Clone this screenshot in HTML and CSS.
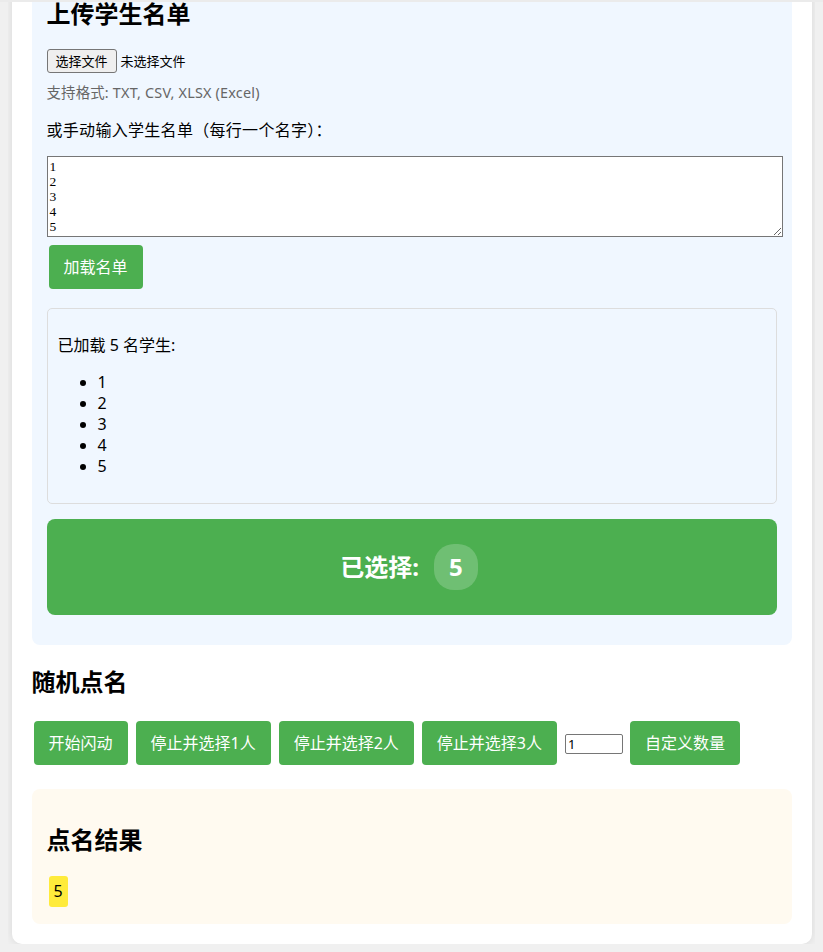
FILE: index.html
```html
<!DOCTYPE html>
<html lang="zh-CN">
<head>
<meta charset="utf-8">
<title>随机点名系统</title>
<link rel="stylesheet" href="styles.css">
</head>
<body>
<div class="top-edge"></div>
<div class="container">
  <h1 class="title">随机点名系统</h1>
  <div class="upload">
    <h2 class="upload-title">上传学生名单</h2>
    <div class="file-row">
      <button class="file-btn" type="button">选择文件</button>
      <span class="file-name">未选择文件</span>
    </div>
    <p class="hint">支持格式: TXT, CSV, XLSX (Excel)</p>
    <p class="label">或手动输入学生名单（每行一个名字）：</p>
    <textarea class="names-input" rows="5">1
2
3
4
5</textarea>
    <div class="load-row">
      <button class="btn" type="button">加载名单</button>
    </div>
    <div class="student-list">
      <p class="loaded">已加载 5 名学生:</p>
      <ul class="list">
        <li>1</li>
        <li>2</li>
        <li>3</li>
        <li>4</li>
        <li>5</li>
      </ul>
    </div>
    <div class="selected">
      <span class="selected-label">已选择:</span>
      <span class="count">5</span>
    </div>
  </div>

  <h2 class="roll-title">随机点名</h2>
  <div class="controls">
    <button class="btn" type="button">开始闪动</button>
    <button class="btn" type="button">停止并选择1人</button>
    <button class="btn" type="button">停止并选择2人</button>
    <button class="btn" type="button">停止并选择3人</button>
    <input class="num" type="number" value="1" min="1">
    <button class="btn" type="button">自定义数量</button>
  </div>

  <div class="result">
    <h2 class="result-title">点名结果</h2>
    <div class="result-names">
      <span class="name">5</span>
    </div>
  </div>
</div>
<script src="script.js"></script>
</body>
</html>
```

FILE: styles.css
```css
html {
  scrollbar-width: none;
}
html::-webkit-scrollbar {
  display: none;
}
body {
  margin: 8px;
  background: #f0f0f0;
  font-family: "Noto Sans", "Noto Sans CJK SC", sans-serif;
  font-size: 16px;
  line-height: 21px;
  color: #000;
}
.top-edge {
  position: fixed;
  top: 0;
  left: 0;
  right: 0;
  height: 2px;
  background: #ebebeb;
  z-index: 10;
}
.container {
  max-width: 800px;
  box-sizing: border-box;
  margin: 0 auto;
  background: #fff;
  padding: 20px;
  border-radius: 10px;
  box-shadow: 0 0 10px rgba(0, 0, 0, 0.1);
}
.title {
  text-align: center;
  font-size: 32px;
  line-height: 42px;
  margin: 0 0 20px;
  color: #333;
}
h2 {
  font-size: 24px;
  line-height: 32px;
  font-weight: bold;
  margin: 20px 0;
}
.upload {
  background: #f0f7ff;
  border-radius: 8px;
  padding: 15px;
}
.upload-title {
  margin: 20px 0 19px;
}
.file-row {
  display: flex;
  align-items: center;
  gap: 4px;
  height: 24px;
  font-size: 13px;
}
.file-btn {
  font-family: "Noto Sans", "Noto Sans CJK SC", sans-serif;
  font-size: 13px;
  line-height: 16px;
  height: 24px;
  padding: 0 8px;
  border: 1px solid #767676;
  border-radius: 3px;
  background: #efefef;
  color: #000;
}
.hint {
  font-size: 14.4px;
  letter-spacing: 0.2px;
  color: #666;
  line-height: 20px;
  margin: 10px 0 0;
}
.label {
  margin: 17px 0 0;
  letter-spacing: 0.3px;
}
.names-input {
  display: block;
  margin: 15px 0 0;
  width: 100%;
  font-family: "Liberation Serif", serif;
  font-size: 13.5px;
  line-height: 15px;
  padding: 2px;
  border: 1px solid #767676;
  resize: vertical;
  background: #fff;
  color: #000;
}
.load-row {
  margin-top: 8px;
  display: flex;
}
.btn {
  margin: 0 2px;
  background: #4caf50;
  color: #fff;
  border: none;
  border-radius: 4px;
  padding: 10px 15px;
  font-family: "Noto Sans", "Noto Sans CJK SC", sans-serif;
  font-size: 16px;
  line-height: 24px;
}
.student-list {
  margin-top: 19px;
  border: 1px solid #ddd;
  border-radius: 5px;
  padding: 10px;
}
.loaded {
  margin: 16px 0;
}
.list {
  margin: 16px 0;
  padding-left: 40px;
}
.selected {
  margin: 15px 0;
  background: #4caf50;
  border-radius: 8px;
  padding: 25px 30px 25px 25px;
  display: flex;
  justify-content: center;
  align-items: center;
  gap: 15px;
  color: #fff;
  font-size: 24px;
  font-weight: bold;
  line-height: 32px;
}
.count {
  background: rgba(255, 255, 255, 0.2);
  padding: 7px 15px;
  border-radius: 20px;
}
.roll-title {
  margin: 21px 0 21px;
}
.controls {
  display: flex;
  align-items: center;
  gap: 4px;
  padding: 2px 0;
}
.controls .btn {
  margin: 0 2px;
}
.num {
  width: 58px;
  height: 20px;
  box-sizing: border-box;
  padding: 1px 2px;
  border: 1px solid #767676;
  border-radius: 2px;
  font-family: "Noto Sans", sans-serif;
  font-size: 13px;
  margin: 2px 1px 0 2px;
}
.result {
  margin-top: 22px;
  background: #fffaf0;
  border-radius: 8px;
  padding: 15px;
}
.result-title {
  margin: 20px 0 18px;
}
.result-names {
  display: flex;
  flex-wrap: wrap;
}
.name {
  display: inline-block;
  background: #ffeb3b;
  padding: 5px;
  margin: 2px;
  border-radius: 3px;
  line-height: 21px;
}
```

FILE: script.js
```js
function toBottom() {
  window.scrollTo(0, document.documentElement.scrollHeight);
}
toBottom();
window.addEventListener('load', toBottom);
```
